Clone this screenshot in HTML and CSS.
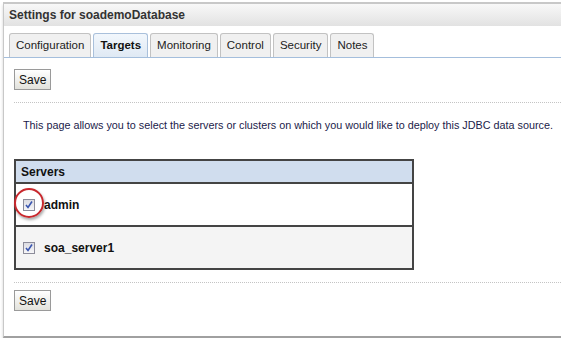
FILE: index.html
```html
<!DOCTYPE html>
<html>
  <head>
    <title>Settings for soademoDatabase</title>
    <meta charset="utf-8">
    <link rel="stylesheet" href="styles.css">
  </head>
  <body>
    <div class="panel">
      <div class="panel-title">Settings for soademoDatabase</div>
      <div class="tab-row">
        <div class="tab">Configuration</div>
        <div class="tab tab-active">Targets</div>
        <div class="tab">Monitoring</div>
        <div class="tab">Control</div>
        <div class="tab">Security</div>
        <div class="tab">Notes</div>
      </div>
      <div class="content">
        <div class="button-row">
          <button class="save-button">Save</button>
        </div>
        <p class="intro">This page allows you to select the servers or clusters on which you would like to deploy this JDBC data source.</p>
        <table class="servers">
          <tr>
            <th>Servers</th>
          </tr>
          <tr class="row-odd">
            <td>
              <span class="check-wrap">
                <span class="check"><svg width="10" height="10" viewBox="0 0 10 10"><path d="M2 5 L4 7.5 L8 1.5" fill="none" stroke="#3a56b0" stroke-width="1.6"/></svg></span>
                <span class="highlight"></span>
              </span>
              <span class="server-name">admin</span>
            </td>
          </tr>
          <tr class="row-even">
            <td>
              <span class="check-wrap">
                <span class="check"><svg width="10" height="10" viewBox="0 0 10 10"><path d="M2 5 L4 7.5 L8 1.5" fill="none" stroke="#3a56b0" stroke-width="1.6"/></svg></span>
              </span>
              <span class="server-name">soa_server1</span>
            </td>
          </tr>
        </table>
        <div class="button-row button-row-bottom">
          <button class="save-button">Save</button>
        </div>
      </div>
    </div>
  </body>
</html>
```

FILE: styles.css
```css
body {
  margin: 0px;
  background-color: #ffffff;
  font-family: "Liberation Sans", Arial, sans-serif;
  font-size: 11px;
  color: #222222;
}

.panel {
  margin: 2px 0 0 3px;
  height: 336px;
  border-top: 2px solid #c8c8c8;
  border-left: 1px solid #c8c8c8;
  border-bottom: 2px solid #a0a0a0;
  box-shadow: 0 3px 3px rgba(0, 0, 0, 0.18);
  box-sizing: border-box;
}

.panel-title {
  height: 22px;
  line-height: 22px;
  padding-left: 5px;
  font-size: 12px;
  font-weight: bold;
  color: #333333;
  background: linear-gradient(#f8f8f8, #e2e2e2);
}

.tab-row {
  display: flex;
  gap: 2px;
  padding: 7px 0 0 5px;
  border-bottom: 1px solid #a4bedc;
}

.tab {
  height: 23px;
  line-height: 23px;
  padding: 0 6px;
  border: 1px solid #c2c2c2;
  border-bottom: none;
  border-radius: 3px 3px 0 0;
  background-color: #f0f0f0;
  font-size: 11.5px;
  color: #222222;
}

.tab-active {
  font-weight: bold;
  background: linear-gradient(#f2f7fc, #dfe9f4);
  border-color: #a9c0db;
  color: #111111;
}

.content {
  padding: 0 0 0 10px;
}

.button-row {
  padding: 11px 0 12px 0;
  border-bottom: 1px dotted #c4c4c4;
}

.button-row-bottom {
  border-bottom: none;
  border-top: 1px dotted #c4c4c4;
  padding-top: 7px;
}

.save-button {
  font-family: "Liberation Sans", Arial, sans-serif;
  font-size: 12px;
  height: 21px;
  padding: 0 4px;
  border: 1px solid #9a9a9a;
  background: linear-gradient(#ffffff, #e2e2dc);
  color: #111111;
}

.intro {
  margin: 16px 0 28px 9px;
  font-size: 10.8px;
  color: #1b1b4a;
  white-space: nowrap;
}

.servers {
  width: 400px;
  border-collapse: collapse;
  border: 2px solid #444444;
  margin-bottom: 12px;
}

.servers th {
  height: 21px;
  text-align: left;
  padding: 0 5px;
  background-color: #d0ddee;
  border-bottom: 2px solid #444444;
  font-size: 12px;
  color: #111111;
}

.servers td {
  height: 41px;
  padding: 0 0 0 7px;
  border-bottom: 2px solid #444444;
}

.row-odd td {
  background-color: #ffffff;
}

.row-even td {
  background-color: #f4f4f4;
}

.check-wrap {
  position: relative;
  display: inline-block;
  vertical-align: middle;
  width: 12px;
  height: 12px;
}

.check {
  display: block;
  width: 10px;
  height: 10px;
  border: 1px solid #8c8c9a;
  background: linear-gradient(#dcdce2, #f6f6f8);
}

.check svg {
  display: block;
}

.highlight {
  position: absolute;
  left: -9px;
  top: -11px;
  width: 26px;
  height: 26px;
  border: 2px solid #c8282d;
  border-radius: 50%;
  box-shadow: 1px 2px 3px rgba(0, 0, 0, 0.35);
}

.server-name {
  vertical-align: middle;
  margin-left: 6px;
  font-size: 12px;
  font-weight: bold;
  color: #111111;
}
```
